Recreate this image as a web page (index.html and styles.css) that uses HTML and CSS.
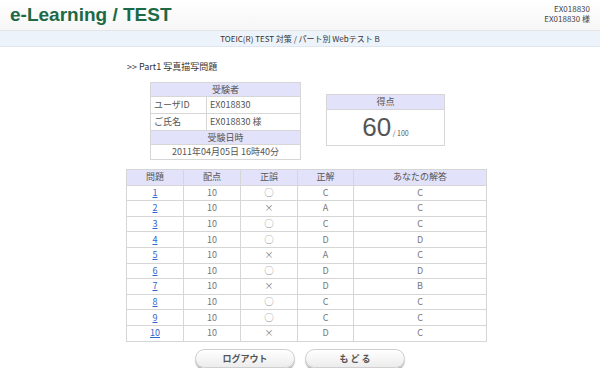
FILE: index.html
```html
<!DOCTYPE html>
<html lang="ja">
<head>
    <meta charset="UTF-8">
    <title>e-Learning / TEST</title>
    <link rel="stylesheet" href="styles.css">
</head>
<body>
    <div class="header">
        <h1 class="logo">e-Learning / TEST</h1>
        <div class="user">
            <div>EX018830</div>
            <div>EX018830 様</div>
        </div>
    </div>
    <div class="subbar">TOEIC(R) TEST 対策 / パート別 Webテスト B</div>

    <div class="content">
        <p class="part-title">&gt;&gt; Part1 写真描写問題</p>

        <div class="summary">
            <table class="info">
                <tr><th colspan="2">受験者</th></tr>
                <tr class="tall"><td class="label">ユーザID</td><td>EX018830</td></tr>
                <tr class="tall"><td class="label">ご氏名</td><td>EX018830 様</td></tr>
                <tr><th colspan="2">受験日時</th></tr>
                <tr class="date"><td colspan="2" class="center">2011年04月05日 16時40分</td></tr>
            </table>

            <div class="score">
                <div class="score-head">得点</div>
                <div class="score-body"><span class="num">60</span><span class="max"> / 100</span></div>
            </div>
        </div>

        <table class="result">
            <tr>
                <th class="c1">問題</th>
                <th class="c2">配点</th>
                <th class="c3">正誤</th>
                <th class="c4">正解</th>
                <th>あなたの解答</th>
            </tr>
            <tr><td><a href="#">1</a></td><td>10</td><td>◯</td><td>C</td><td>C</td></tr>
            <tr><td><a href="#">2</a></td><td>10</td><td>×</td><td>A</td><td>C</td></tr>
            <tr><td><a href="#">3</a></td><td>10</td><td>◯</td><td>C</td><td>C</td></tr>
            <tr><td><a href="#">4</a></td><td>10</td><td>◯</td><td>D</td><td>D</td></tr>
            <tr><td><a href="#">5</a></td><td>10</td><td>×</td><td>A</td><td>C</td></tr>
            <tr><td><a href="#">6</a></td><td>10</td><td>◯</td><td>D</td><td>D</td></tr>
            <tr><td><a href="#">7</a></td><td>10</td><td>×</td><td>D</td><td>B</td></tr>
            <tr><td><a href="#">8</a></td><td>10</td><td>◯</td><td>C</td><td>C</td></tr>
            <tr><td><a href="#">9</a></td><td>10</td><td>◯</td><td>C</td><td>C</td></tr>
            <tr><td><a href="#">10</a></td><td>10</td><td>×</td><td>D</td><td>C</td></tr>
        </table>

        <div class="buttons">
            <button class="btn">ログアウト</button>
            <button class="btn">も ど る</button>
        </div>
    </div>
</body>
</html>
```

FILE: styles.css
```css
body {
    margin: 0;
    font-family: "Noto Sans CJK JP", "Liberation Sans", sans-serif;
    font-size: 9px;
    color: #555;
    background: #fff;
}
.header {
    height: 30px;
    display: flex;
    justify-content: space-between;
    align-items: flex-start;
    background: linear-gradient(#fff, #f6f6f6);
    border-bottom: 1px solid #e4e4e4;
}
.logo {
    margin: 3px 0 0 10px;
    font-family: "Liberation Sans", Arial, sans-serif;
    font-size: 19px;
    font-weight: bold;
    color: #1c6a45;
    line-height: 24px;
}
.user {
    margin: 4px 10px 0 0;
    text-align: right;
    font-size: 8px;
    line-height: 10px;
    color: #444;
}
.subbar {
    height: 15px;
    line-height: 15px;
    text-align: center;
    font-size: 8px;
    color: #333;
    background: #edf3fa;
    border-bottom: 1px solid #dfe6ee;
}
.content {
    width: 360px;
    margin-left: 126px;
}
.part-title {
    margin: 14px 0 0 1px;
    font-size: 9px;
    color: #333;
    line-height: 12px;
}
.summary {
    display: flex;
    align-items: flex-start;
    margin: 9px 0 0 24px;
}
table {
    border-collapse: collapse;
}
.info {
    width: 151px;
}
.info th, .info td {
    border: 1px solid #d6d6d6;
    font-weight: normal;
    height: 13px;
    padding: 0 3px;
    line-height: 12px;
    white-space: nowrap;
}
.info th {
    background: #e2e2fa;
    text-align: center;
}
.info .tall td {
    height: 16px;
}
.info .date td {
    height: 14px;
}
.info .label {
    width: 49px;
}
.center {
    text-align: center;
}
.score {
    margin: 12px 0 0 25px;
    width: 117px;
    border: 1px solid #d6d6d6;
}
.score-head {
    background: #e2e2fa;
    text-align: center;
    height: 14px;
    line-height: 14px;
    border-bottom: 1px solid #d6d6d6;
}
.score-body {
    height: 35px;
    line-height: 35px;
    text-align: center;
}
.score .num {
    font-family: "Liberation Sans", Arial, sans-serif;
    font-size: 26px;
    color: #555;
}
.score .max {
    font-size: 7px;
}
.result {
    width: 361px;
    margin-top: 9px;
}
.result th, .result td {
    border: 1px solid #d6d6d6;
    font-weight: normal;
    text-align: center;
    height: 14.6px;
    padding: 0;
    line-height: 14px;
}
.result th {
    background: #e2e2fa;
}
.result td {
    color: #777;
}
.result .c1, .result .c2, .result .c3 {
    width: 56px;
}
.result .c4 {
    width: 55px;
}
.result a {
    color: #3366cc;
}
.buttons {
    display: flex;
    gap: 10px;
    margin: 7px 0 0 69px;
}
.btn {
    width: 100px;
    height: 19px;
    border: 1px solid #cfcfcf;
    border-radius: 10px;
    background: linear-gradient(#fff, #ececec);
    box-shadow: 0 2px 1px #b8b8b8;
    font-family: "Noto Sans CJK JP", sans-serif;
    font-size: 9px;
    font-weight: bold;
    color: #555;
    padding: 0;
}
```
